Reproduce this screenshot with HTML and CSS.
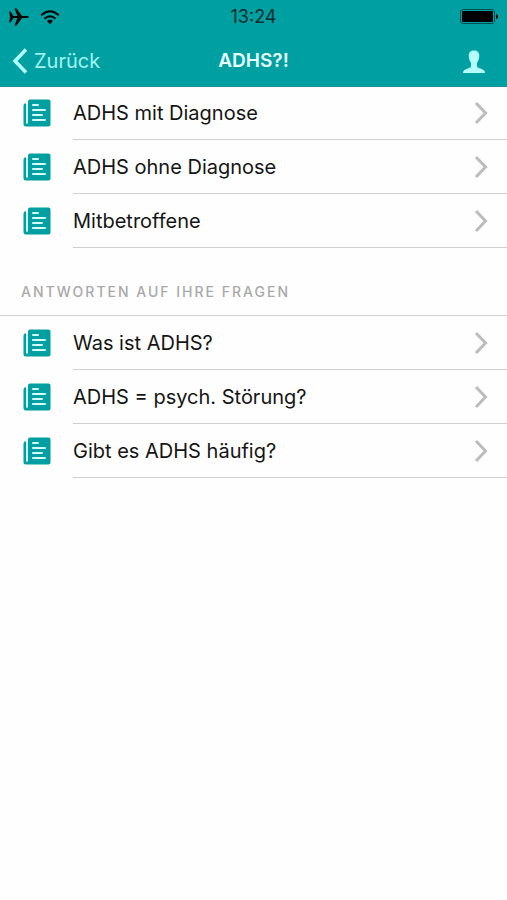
FILE: index.html
```html
<!DOCTYPE html>
<html lang="de">
<head>
<meta charset="utf-8">
<meta name="viewport" content="width=device-width, initial-scale=1">
<title>ADHS?!</title>
<link rel="stylesheet" href="styles.css">
</head>
<body>
<svg class="defs" aria-hidden="true">
  <symbol id="news" viewBox="0 0 28 28">
    <path fill="#009fa2" d="M3 4.200V23.500q0 1.200 1 1.200t1-1V2.500q0-2 2-2h18.500q2 0 2 2v23q0 2-2 2H3q-2.500 0-2.500-2.500V6.500q0-2.300 2.500-2.300z"/>
    <path fill="none" stroke="#c9fbf8" stroke-width="1.800" d="M4 5v19"/>
    <path fill="none" stroke="#d4fffb" stroke-width="2" stroke-linecap="round" d="M10 6h5M10 11h12M10 16h9M10 21h12"/>
  </symbol>
  <symbol id="chevron" viewBox="0 0 14 24">
    <path fill="none" stroke="#bcbcbc" stroke-width="3" d="M2 2l9.500 10L2 22"/>
  </symbol>
</svg>
<header class="top">
  <div class="status">
    <div class="signals">
      <svg width="20" height="18" viewBox="0 0 20 18" aria-label="Flugmodus" role="img"><path d="M0 3.500h1.500L4.500 8h4L5.500.5h2L13 8h4.500Q20 8 20 9t-2.500 1H13l-5.500 7.500h-2L8.500 10h-4l-3 4.500H0L1.200 9z"/></svg>
      <svg width="20" height="15" viewBox="0 0 20 15" aria-label="WLAN" role="img"><g fill="none" stroke="#000" stroke-width="2"><path d="M1.200 5.200Q10-2.800 18.800 5.200"/><path d="M4.500 8.700Q10 3.700 15.500 8.700"/></g><path d="M7 11q3-2.600 6 0l-3 3.300z"/></svg>
    </div>
    <time class="clock">13:24</time>
    <svg class="battery" width="38" height="16" viewBox="0 0 38 16" aria-label="Batterie" role="img"><rect x=".5" y=".5" width="34" height="14" rx="2.500" fill="none" stroke="#004e50"/><rect x="2" y="2" width="31" height="11" rx="1"/><path d="M36 5q2 .5 2 2.500T36 10z"/></svg>
  </div>
  <nav class="bar">
    <a class="back" href="#"><svg width="16" height="26" viewBox="0 0 16 26" aria-hidden="true"><path fill="none" stroke="#b5fffb" stroke-width="3.500" d="M14 1.500L3 13l11 11.500"/></svg>Zurück</a>
    <h1 class="title">ADHS?!</h1>
    <button class="profile" type="button" aria-label="Profil"><svg width="22" height="23" viewBox="0 0 22 23"><path fill="#b5fffb" d="M11 .5c4 0 5.700 2.500 5.200 6.500-.3 3-1.300 4.500-2.200 5.800v3.400c0 1.200 2 1.800 4 2.500 2.500.8 3.800 1.600 4 4.300H0c.2-2.700 1.500-3.500 4-4.300 2-.7 4-1.300 4-2.500v-3.400C7.100 11.500 6.100 10 5.800 7 5.300 3 7 .5 11 .5z"/></svg></button>
  </nav>
</header>
<main>
  <ul class="list">
    <li><a class="row" href="#"><svg class="news"><use href="#news"/></svg><span class="label">ADHS mit Diagnose<svg class="chevron"><use href="#chevron"/></svg></span></a></li>
    <li><a class="row" href="#"><svg class="news"><use href="#news"/></svg><span class="label">ADHS ohne Diagnose<svg class="chevron"><use href="#chevron"/></svg></span></a></li>
    <li><a class="row" href="#"><svg class="news"><use href="#news"/></svg><span class="label">Mitbetroffene<svg class="chevron"><use href="#chevron"/></svg></span></a></li>
  </ul>
  <h2 class="section">ANTWORTEN AUF IHRE FRAGEN</h2>
  <ul class="list">
    <li><a class="row" href="#"><svg class="news"><use href="#news"/></svg><span class="label">Was ist ADHS?<svg class="chevron"><use href="#chevron"/></svg></span></a></li>
    <li><a class="row" href="#"><svg class="news"><use href="#news"/></svg><span class="label">ADHS = psych. Störung?<svg class="chevron"><use href="#chevron"/></svg></span></a></li>
    <li><a class="row" href="#"><svg class="news"><use href="#news"/></svg><span class="label">Gibt es ADHS häufig?<svg class="chevron"><use href="#chevron"/></svg></span></a></li>
  </ul>
</main>
</body>
</html>
```
FILE: styles.css
```css
* { box-sizing: border-box; }
body {
  margin: 0;
  background: #fefefe;
  color: #151515;
  font-family: Inter, "Liberation Sans", sans-serif;
}
a { color: inherit; text-decoration: none; }
.defs { display: none; }
.top {
  position: relative;
  background: #009fa2;
  box-shadow: 0 1px 0 #1a8f91;
}
.status, .bar {
  display: grid;
  grid-template-columns: 1fr auto 1fr;
  align-items: center;
}
.status { height: 34px; padding: 0 9px; }
.signals { display: flex; align-items: center; gap: 11px; }
.clock { font-size: 18px; line-height: 24px; color: #062c2c; }
.battery { justify-self: end; }
.bar { height: 52px; padding: 2px 12px 0; }
.back {
  display: flex;
  align-items: center;
  gap: 6px;
  font-size: 20px;
  line-height: 24px;
  color: #a5f3ef;
}
.title {
  margin: 0;
  font-size: 19px;
  line-height: 24px;
  font-weight: 600;
  color: #e9ffff;
}
.profile {
  justify-self: end;
  display: flex;
  margin-right: 10px;
  padding: 0;
  border: 0;
  background: none;
}
.list { margin: 0; padding: 0; list-style: none; }
.row {
  display: flex;
  align-items: center;
  gap: 22px;
  height: 54px;
  padding-left: 23px;
}
.news { flex: none; width: 28px; height: 28px; }
.label {
  flex: 1;
  display: flex;
  align-items: center;
  justify-content: space-between;
  height: 100%;
  padding-right: 19px;
  border-bottom: 1px solid #d0d0d0;
  font-size: 20px;
}
.chevron { width: 14px; height: 24px; }
.section {
  margin: 0;
  padding: 34px 21px 13px;
  border-bottom: 1px solid #d0d0d0;
  font-size: 14px;
  line-height: 20px;
  font-weight: 500;
  letter-spacing: 2px;
  color: #a9a9a9;
}
```
